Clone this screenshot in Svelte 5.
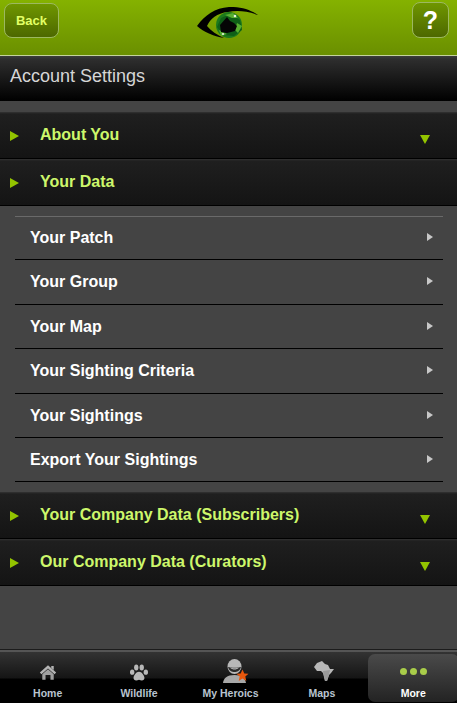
<script>
  const links = [
    "Your Patch",
    "Your Group",
    "Your Map",
    "Your Sighting Criteria",
    "Your Sightings",
    "Export Your Sightings"
  ];
</script>

<div class="page">
  <header class="topbar">
    <button class="btn back">Back</button>
    <svg class="logo" width="62" height="32" viewBox="0 0 62 32" aria-hidden="true">
      <path d="M0 19 C8 8 18 1 32 0 C44 -0.5 54 3 61 8 C50 4 40 3 31 5 C20 6 13 12 10 19 C14 24 20 28 27 31 C16 29 7 25 0 19Z" fill="#000" />
      <g transform="translate(2 -1)">
        <circle cx="30" cy="19" r="13" fill="#1c7a1c" />
        <path d="M22 12 L31 8 L41 14 L43 24 L35 30 L24 29 L18 21Z" fill="#0f5f17" />
        <path d="M26 9 L34 7 L39 12 L33 12Z M38 17 L43 20 L39 27 L36 24Z M20 24 L28 28 L22 30Z" fill="#58b030" />
        <path d="M21 19 L28 11 L31 15 L35 17 L38 20 L36 25 L28 27 L22 26Z" fill="#050505" />
        <circle cx="36" cy="10" r="1.3" fill="#e8f4e0" />
        <circle cx="24" cy="28" r="1.1" fill="#e8f4e0" />
      </g>
    </svg>
    <button class="btn help">?</button>
  </header>

  <div class="titlebar">Account Settings</div>

  <main class="content">
    <div class="section">
      <span class="arrow-right"></span>
      <h2>About You</h2>
      <span class="arrow-down"></span>
    </div>
    <div class="section">
      <span class="arrow-right"></span>
      <h2>Your Data</h2>
    </div>

    <ul class="links">
      {#each links as link}
        <li>{link}<span class="chevron"></span></li>
      {/each}
    </ul>

    <div class="section">
      <span class="arrow-right"></span>
      <h2>Your Company Data (Subscribers)</h2>
      <span class="arrow-down"></span>
    </div>
    <div class="section">
      <span class="arrow-right"></span>
      <h2>Our Company Data (Curators)</h2>
      <span class="arrow-down"></span>
    </div>
  </main>

  <nav class="tabs">
    <div class="tab">
      <svg class="home" width="18" height="17" viewBox="0 0 22 20" aria-hidden="true">
        <path d="M11 1 L21 10 L19 12 L11 5 L3 12 L1 10Z" fill="#b4b4b4" />
        <path d="M15 2h3v5l-3-2.500Z" fill="#b4b4b4" />
        <path d="M4 12 L11 6 L18 12 V19 H14 V13 H8 V19 H4Z" fill="#a0a0a0" />
      </svg>
      <span>Home</span>
    </div>
    <div class="tab">
      <svg width="20" height="19" viewBox="0 0 22 20" aria-hidden="true">
        <g fill="#b8b8b8">
          <ellipse cx="3.500" cy="8.500" rx="2.400" ry="3" />
          <ellipse cx="8" cy="3.500" rx="2.400" ry="3.300" />
          <ellipse cx="14" cy="3.500" rx="2.400" ry="3.300" />
          <ellipse cx="18.500" cy="8.500" rx="2.400" ry="3" />
          <path d="M11 8 C14 8 17 12 17 15 C17 18 14 18 11 17 C8 18 5 18 5 15 C5 12 8 8 11 8Z" />
        </g>
      </svg>
      <span>Wildlife</span>
    </div>
    <div class="tab">
      <svg class="hero" width="26" height="24" viewBox="0 0 26 24" aria-hidden="true">
        <ellipse cx="11.500" cy="7.500" rx="7" ry="7.500" fill="#b8b8b8" />
        <path d="M5 8 C8 9 15 9 18 8 C17 12 14 13 11.500 13 C9 13 6 12 5 8Z" fill="#2a2a2a" />
        <path d="M7 8.500 C9 9.500 14 9.500 16 8.500 C15 10 13 10.500 11.500 10.500 C10 10.500 8 10 7 8.500Z" fill="#b8b8b8" />
        <path d="M0 24 C0.500 19 4 16 11.500 16 C19 16 22 19 23 24Z" fill="#a8a8a8" />
        <path d="M19.500 10.500 L21.300 14.500 L25.500 14.800 L22.300 17.500 L23.300 22 L19.500 19.500 L15.700 22 L16.700 17.500 L13.500 14.800 L17.700 14.500Z" fill="#e8570c" />
      </svg>
      <span>My Heroics</span>
    </div>
    <div class="tab">
      <svg class="africa" width="20" height="20" viewBox="0 0 20 20" aria-hidden="true">
        <path d="M3 2 L8 0 L11 3 L14 4 L16 8 L20 8 L17 12 L15 14 L13 20 L11 20 L9 12 L7 10 L3 10 L0 6Z" fill="#b8b8b8" />
        <path d="M9 10 L16 9 L15 14 L13 20 L11 20Z" fill="#9a9a9a" />
      </svg>
      <span>Maps</span>
    </div>
    <div class="tab active">
      <div class="dots"><i></i><i></i><i></i></div>
      <span>More</span>
    </div>
  </nav>
</div>

<style>
  :global(body) {
    margin: 0;
    background: #444;
  }

  .page {
    width: 457px;
    height: 703px;
    display: flex;
    flex-direction: column;
    overflow: hidden;
    font-family: "Liberation Sans", Arial, sans-serif;
    background: #444;
  }

  .topbar {
    height: 56px;
    flex: none;
    box-sizing: border-box;
    display: flex;
    align-items: flex-start;
    justify-content: space-between;
    padding: 2px 8px 0 4px;
    background: linear-gradient(#85b200, #6a8f00);
    border-bottom: 1px solid #c4d49a;
    position: relative;
  }

  .btn {
    box-sizing: border-box;
    margin: 0;
    padding: 0;
    border: 1px solid #9cb860;
    border-radius: 8px;
    background: linear-gradient(#6f9600, #4d6800);
    font-family: inherit;
    font-weight: bold;
  }

  .back {
    width: 55px;
    height: 35px;
    margin-top: 1px;
    color: #e2ff66;
    font-size: 13px;
  }

  .help {
    width: 37px;
    height: 36px;
    color: #fff;
    font-size: 25px;
    line-height: 1;
  }

  .logo {
    position: absolute;
    left: 197px;
    top: 7px;
  }

  .titlebar {
    height: 45px;
    flex: none;
    box-sizing: border-box;
    padding: 9px 0 0 10px;
    background: linear-gradient(#3c3c3c 0, #2e2e2e 3px, #000 100%);
    color: #d6d6d6;
    font-size: 18px;
    line-height: 22px;
  }

  .content {
    flex: 1;
    padding-top: 11px;
    background: #444;
  }

  .section {
    height: 47px;
    box-sizing: border-box;
    position: relative;
    padding: 12px 0 0 40px;
    background: linear-gradient(#333 0, #1f1f1f 2px, #141414 100%);
    border-bottom: 1px solid #000;
  }

  h2 {
    margin: 0;
    color: #cdf76b;
    font-size: 16px;
    line-height: 21px;
    font-weight: bold;
  }

  .arrow-right {
    position: absolute;
    left: 10px;
    top: 19px;
    border-left: 9px solid #93c400;
    border-top: 5px solid transparent;
    border-bottom: 5px solid transparent;
  }

  .arrow-down {
    position: absolute;
    left: 420px;
    top: 23px;
    border-top: 9px solid #93c400;
    border-left: 5.500px solid transparent;
    border-right: 5.500px solid transparent;
  }

  .links {
    list-style: none;
    margin: 0;
    padding: 10px 14px 10px 15px;
  }

  .links li {
    height: 44.500px;
    box-sizing: border-box;
    position: relative;
    padding: 12px 0 0 15px;
    color: #fff;
    font-size: 16px;
    line-height: 20px;
    font-weight: bold;
    border-bottom: 1px solid #000;
  }

  .links li:first-child {
    height: 44px;
    padding-top: 11px;
    border-top: 1px solid #6a6a6a;
  }

  .links li:last-child {
    height: 44px;
  }

  .chevron {
    position: absolute;
    right: 10px;
    top: 17px;
    border-left: 6px solid #c8c8c8;
    border-top: 4px solid transparent;
    border-bottom: 4px solid transparent;
  }

  .links li:first-child .chevron {
    top: 16px;
  }

  .tabs {
    height: 53px;
    flex: none;
    box-sizing: border-box;
    display: flex;
    padding: 2px 0 1px 2px;
    border-top: 2px solid #555;
    background: linear-gradient(#333 0, #151515 26px, #000 27px);
    box-shadow: 0 -1px 0 #1c1c1c;
  }

  .tab {
    width: 91.400px;
    flex: none;
    display: flex;
    flex-direction: column;
    align-items: center;
    justify-content: flex-end;
    gap: 4px;
    color: #b9c4d0;
    font-size: 10.500px;
    font-weight: bold;
    line-height: 13px;
  }

  .tab span {
    margin-bottom: 2px;
  }

  .home {
    margin-bottom: 2px;
  }

  .hero {
    margin-left: 12px;
  }

  .africa {
    margin-left: 4px;
    margin-bottom: 2px;
  }

  .active {
    border-radius: 7px;
    background: linear-gradient(#4a4a4a, #232323);
    color: #fff;
  }

  .dots {
    display: flex;
    gap: 3px;
    margin-bottom: 8px;
  }

  .dots i {
    width: 7px;
    height: 7px;
    border-radius: 50%;
    background: #a9cd4a;
  }
</style>
